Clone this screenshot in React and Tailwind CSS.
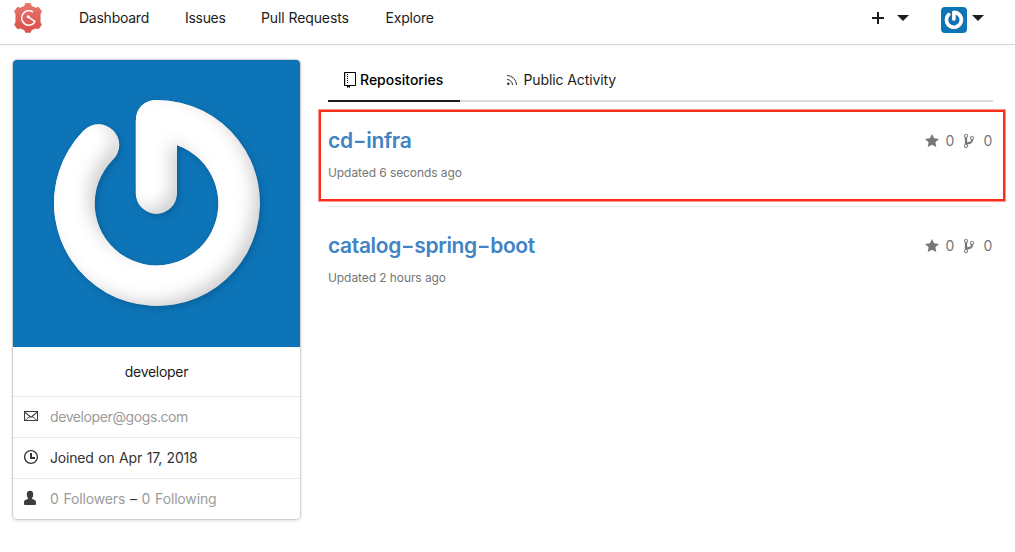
import React from "react";

function Avatar({ className, id }) {
  return (
    <svg viewBox="13 60 287 287" preserveAspectRatio="none" className={className} aria-hidden="true">
      <defs>
        <clipPath id={id + "c"}><use href={"#" + id + "m"} /></clipPath>
        <filter id={id + "b"} x="-20%" y="-20%" width="140%" height="140%"><feGaussianBlur stdDeviation="8" /></filter>
        <filter id={id + "s"} x="-20%" y="-20%" width="140%" height="140%"><feGaussianBlur stdDeviation="3" /></filter>
        <path id={id + "m"} d="M135.8 121 C135.8 108 144 100 157 100 A103 103 0 1 1 83.2 131.1 A20.7 20.7 0 1 1 112.7 160.1 A61.8 61.8 0 1 0 177 145.3 V193.3 A20.6 20.6 0 0 1 135.8 193.3 Z" />
      </defs>
      <rect x="13" y="60" width="287" height="287" fill="#0d74b7" />
      <use href={"#" + id + "m"} fill="#064f83" opacity="0.5" filter={"url(#" + id + "s)"} transform="translate(2 2.5)" />
      <use href={"#" + id + "m"} fill="#c0c0c0" />
      <g clipPath={"url(#" + id + "c)"}>
        <use href={"#" + id + "m"} fill="#fff" stroke="#fff" strokeWidth="6" filter={"url(#" + id + "b)"} transform="translate(-9 -7)" />
        <use href={"#" + id + "m"} fill="#fff" opacity="0.25" />
      </g>
    </svg>
  );
}

const ICONS = {
  mail: ["0 0 14 16", "M0 3v10h14V3H0zm12.5 1L7 8.6 1.5 4h11zM1 5l4.2 3.5L1 12V5zm.9 7L6 9.1l1 .9 1-.9 4.1 2.9H1.9zM13 12L8.8 8.5 13 5v7z"],
  clock: ["0 0 14 16", "M8 8h3v2H7c-.55 0-1-.45-1-1V4h2v4zM7 2.3c3.14 0 5.7 2.56 5.7 5.7s-2.56 5.7-5.7 5.7A5.71 5.71 0 0 1 1.3 8c0-3.14 2.56-5.7 5.7-5.7zM7 1C3.14 1 0 4.14 0 8s3.14 7 7 7 7-3.14 7-7-3.14-7-7-7z"],
  person: ["0 0 12 16", "M12 14a1 1 0 0 1-1 1H1a1 1 0 0 1-1-1v-2c0-1.6 1.300-2.200 4-3 .2-.4.2-.7 0-1-.8-.7-1.200-1.700-1.200-4 0-2.200 1.400-3.200 3.200-3.200s3.200 1 3.200 3.200c0 2.300-.4 3.300-1.200 4-.2.300-.2.600 0 1 2.700.8 4 1.400 4 3v2z"],
  repo: ["0 0 12 16", "M4 9H3V8h1v1zm0-3H3v1h1V6zm0-2H3v1h1V4zm0-2H3v1h1V2zm8-1v12c0 .55-.45 1-1 1H6v2l-1.500-1L3 16v-2H1c-.55 0-1-.45-1-1V1c0-.55.45-1 1-1h10c.55 0 1 .45 1 1zM4 10H3v1h1v-1zm7-9H1.200v12H11V1z"],
  star: ["0 0 14 16", "M14 6l-4.900-.64L7 1 4.900 5.360 0 6l3.600 3.260L2.670 14 7 11.670 11.330 14l-.93-4.740L14 6z"],
  branch: ["0 0 10 16", "M10 5c0-1.11-.89-2-2-2a1.993 1.993 0 0 0-1 3.72v.3c-.02.52-.23.98-.63 1.38-.4.4-.86.61-1.38.63-.83.02-1.48.16-2 .45V4.72a1.993 1.993 0 0 0-1-3.72C.88 1 0 1.89 0 3a2 2 0 0 0 1 1.72v6.56c-.59.35-1 .99-1 1.72 0 1.11.89 2 2 2 1.11 0 2-.89 2-2 0-.53-.2-1-.53-1.36.09-.06.48-.41.59-.47.25-.11.56-.17.94-.17 1.05-.05 1.95-.45 2.75-1.25S8.95 7.77 9 6.73h-.02C9.59 6.37 10 5.73 10 5zM2 1.8c.66 0 1.2.55 1.2 1.2 0 .65-.55 1.2-1.2 1.2C1.35 4.2.8 3.65.8 3c0-.65.55-1.2 1.2-1.2zm0 12.410c-.66 0-1.2-.55-1.2-1.2 0-.65.55-1.2 1.2-1.2.65 0 1.2.55 1.2 1.2 0 .65-.55 1.2-1.2 1.2zm6-8c-.66 0-1.2-.55-1.2-1.2 0-.65.55-1.2 1.2-1.2.65 0 1.2.55 1.2 1.2 0 .65-.55 1.2-1.2 1.2z"],
};

function Icon({ name, className }) {
  const [viewBox, d] = ICONS[name];
  return <svg viewBox={viewBox} className={className} fill="currentColor" fillRule="evenodd" aria-hidden="true"><path d={d} /></svg>;
}

function Caret() {
  return <svg viewBox="0 0 12 6" className="h-1.5 w-3" aria-hidden="true"><path d="M0 0h12L6 6z" fill="#1b1c1d" /></svg>;
}

function Logo() {
  return (
    <svg viewBox="0 0 28 30" className="h-[30px] w-7 shrink-0" aria-hidden="true">
      <defs><linearGradient id="lg" x1="0" y1="0" x2="0" y2="1"><stop offset="0" stopColor="#e9776f" /><stop offset="1" stopColor="#d84f49" /></linearGradient></defs>
      <path fill="url(#lg)" stroke="#db5f58" strokeWidth="0.6" strokeLinejoin="round" d="M11.500.5h5l.8 2.500 4.200 2 3-.7 3 4-1.300 3v7.600l1.300 3-3 4-3-.7-4.200 2-.8 2.300h-5l-.8-2.300-4.200-2-3 .7-3-4 1.300-3v-7.600L.5 8.300l3-4 3 .7 4.200-2z" />
      <path fill="none" stroke="#fff" strokeWidth="1.600" strokeLinecap="round" strokeLinejoin="round" d="M18.500 8.700a7.200 7.200 0 1 0 .5 12.200Q20.400 20 20.800 18.300L14.200 13.800" />
      <circle cx="14.200" cy="13.800" r="1.500" fill="#fff" />
    </svg>
  );
}

function Repo({ name, updated, className, titleClass }) {
  return (
    <article className={"h-[105px] pt-[25px] " + className}>
      <div className="flex h-7 items-center justify-between">
        <h2 className={"text-[21px] font-semibold text-[#4183c4] " + titleClass}>{name.split("-").map((part, i) => <React.Fragment key={part}>{i > 0 && <span className="mx-[2px] inline-block scale-x-[1.4]">-</span>}{part}</React.Fragment>)}</h2>
        <div className="flex items-center text-sm text-[#767676]">
          <Icon name="star" className="mb-px h-4 w-[14px]" />
          <span className="ml-[6.5px] w-[9px]">0</span>
          <Icon name="branch" className="mb-px ml-[9px] h-4 w-2.5 stroke-current stroke-[0.2]" />
          <span className="ml-2.5 w-[9.5px]">0</span>
        </div>
      </div>
      <p className="mt-2 text-xs leading-5 tracking-[-0.08px] text-[#767676]">{updated}</p>
    </article>
  );
}

export default function App() {
  return (
    <div className="h-[552px] w-[1015px] overflow-hidden bg-white font-['Inter','Liberation_Sans',sans-serif] text-sm text-[#1b1c1d]">
      <header className="flex h-[45px] items-center border-b border-[#d9d9d9] pb-2 pl-3.5 pr-[31px] shadow-[0_1px_4px_rgba(0,0,0,0.05)]">
        <Logo />
        <nav className="ml-[37px] flex items-center">
          <a className="w-[106px] tracking-[-0.25px]">Dashboard</a>
          <a className="w-[76px] tracking-[-0.3px]">Issues</a>
          <a className="w-[124.5px] tracking-[-0.1px]">Pull Requests</a>
          <a className="tracking-[-0.2px]">Explore</a>
        </nav>
        <div className="ml-auto flex items-center">
          <svg viewBox="0 0 14 14" className="mr-3 h-[14px] w-[14px]" aria-hidden="true"><path d="M7 1v12M1 7h12" stroke="#1b1c1d" strokeWidth="2" /></svg>
          <Caret />
          <Avatar id="small" className="ml-8 mr-[5px] mt-1 size-[26px] rounded-[4px]" />
          <Caret />
        </div>
      </header>
      <main className="flex pl-3 pr-[22px] pt-3.5">
        <aside className="h-[461px] w-[289px] shrink-0 overflow-hidden rounded-[5px] border border-[#d0d0d0] shadow-[0_1px_3px_rgba(0,0,0,0.12)]">
          <Avatar id="large" className="block h-[287px] w-[287px]" />
          <div className="flex h-[49px] items-center justify-center pt-px tracking-[-0.3px]">developer</div>
          <div className="flex h-[41px] items-center border-t border-[#e8e8e8] pl-[11px] tracking-[-0.4px] text-[#9b9b9b]"><Icon name="mail" className="mb-0.5 mr-3 h-4 w-[14px] text-[#3d3d3d]" />developer@gogs.com</div>
          <div className="flex h-[41px] items-center border-t border-[#e8e8e8] pl-[11px] tracking-[-0.18px] text-[#333] [word-spacing:0.8px]"><Icon name="clock" className="mb-0.5 mr-3 h-4 w-[14px]" />Joined on Apr 17, 2018</div>
          <div className="flex h-[41px] items-center border-t border-[#e8e8e8] pl-[11px] tracking-[-0.15px] text-[#9b9b9b] [word-spacing:1px]"><Icon name="person" className="mb-0.5 mr-3.5 h-4 w-3 text-[#3d3d3d]" /><span className="whitespace-pre">0 Followers <span className="text-[#333]">–</span> 0 Following</span></div>
        </aside>
        <section className="relative ml-[27px] min-w-0 flex-1">
          <div className="flex h-[43px] border-b-2 border-[#dcdcdc]">
            <div className="flex h-[43px] w-[132px] items-center border-b-2 border-[#1b1c1d] pl-4 font-medium text-black"><Icon name="repo" className="mr-1 h-4 w-3" />Repositories</div>
            <div className="flex h-[41px] items-center pl-[46px] tracking-[-0.1px]">
              <svg viewBox="0 0 12 12" className="mr-[5.5px] size-3" fill="none" stroke="#333" aria-hidden="true"><circle cx="2.300" cy="9.700" r="1.300" fill="#333" stroke="none" /><path d="M1 5.500a5.500 5.500 0 0 1 5.500 5.500M1 1.500a9.500 9.500 0 0 1 9.500 9.500" /></svg>Public Activity
            </div>
          </div>
          <Repo name="cd-infra" updated="Updated 6 seconds ago" className="border-b border-[#ededed]" titleClass="tracking-[-0.3px]" />
          <Repo name="catalog-spring-boot" updated="Updated 2 hours ago" className="" titleClass="tracking-[-0.37px]" />
          <div className="pointer-events-none absolute -left-[9px] -right-[12px] top-[51px] h-[91px] border-2 border-[#fb2c1c] shadow-[0_0_0_1px_#fb2c1c80]" />
        </section>
      </main>
    </div>
  );
}
